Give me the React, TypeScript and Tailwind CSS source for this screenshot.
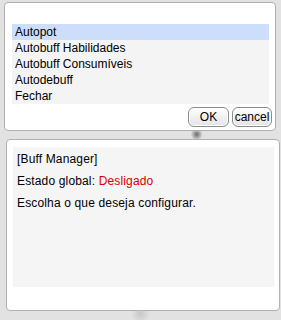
import React from "react";

const font = { fontFamily: '"Liberation Sans", Arial, sans-serif' };

export default function App() {
  const items = ["Autopot", "Autobuff Habilidades", "Autobuff Consumíveis", "Autodebuff", "Fechar"];
  return (
    <div
      className="w-[281px] h-[320px] overflow-hidden bg-[#e2e2e2] bg-[radial-gradient(circle_at_20%_30%,#cfcfcf_0,transparent_8px),radial-gradient(circle_at_70%_42%,#6a6a6a_0,transparent_6px),radial-gradient(circle_at_50%_98%,#c8c8c8_0,transparent_10px)] flex flex-col text-[12px] text-black"
      style={font}
    >
      {/* top panel */}
      <div className="ml-[4px] mt-[2px] w-[272px] h-[129px] shrink-0 rounded-[4px] border border-[#b0b0b0] bg-white flex flex-col">
        <div className="mt-[21px] ml-[7px] w-[257px] h-[80px] bg-[#f4f4f4] flex flex-col">
          {items.map((t, i) => (
            <div
              key={t}
              className={`h-[16px] leading-[16px] pl-[3px] ${i === 0 ? "bg-[#cddefa]" : ""}`}
            >
              {t}
            </div>
          ))}
        </div>
        <div className="mt-[3px] mr-[3px] flex justify-end gap-[3px]">
          <button className="w-[41px] h-[20px] rounded-[6px] border border-[#8c8c8c] bg-gradient-to-b from-white to-[#e4e4e4] text-[12px] leading-[18px] text-black shadow-[inset_0_0_0_1px_#ffffff]">
            OK
          </button>
          <button className="w-[40px] h-[20px] rounded-[6px] border border-[#8c8c8c] bg-gradient-to-b from-white to-[#e4e4e4] text-[12px] leading-[18px] text-black shadow-[inset_0_0_0_1px_#ffffff]">
            cancel
          </button>
        </div>
      </div>

      {/* bottom panel */}
      <div className="ml-[6px] mt-[8px] w-[274px] h-[172px] shrink-0 rounded-[4px] border border-[#b0b0b0] bg-white flex flex-col">
        <div className="mt-[7px] ml-[6px] w-[261px] h-[140px] bg-[#f5f5f5] flex flex-col pl-[4px] pt-[5px] tracking-[0.15px]">
          <div className="h-[22px] leading-[14px]">[Buff Manager]</div>
          <div className="h-[22px] leading-[14px]">
            Estado global: <span className="text-[#d40000]">Desligado</span>
          </div>
          <div className="h-[22px] leading-[14px]">Escolha o que deseja configurar.</div>
        </div>
      </div>
    </div>
  );
}
